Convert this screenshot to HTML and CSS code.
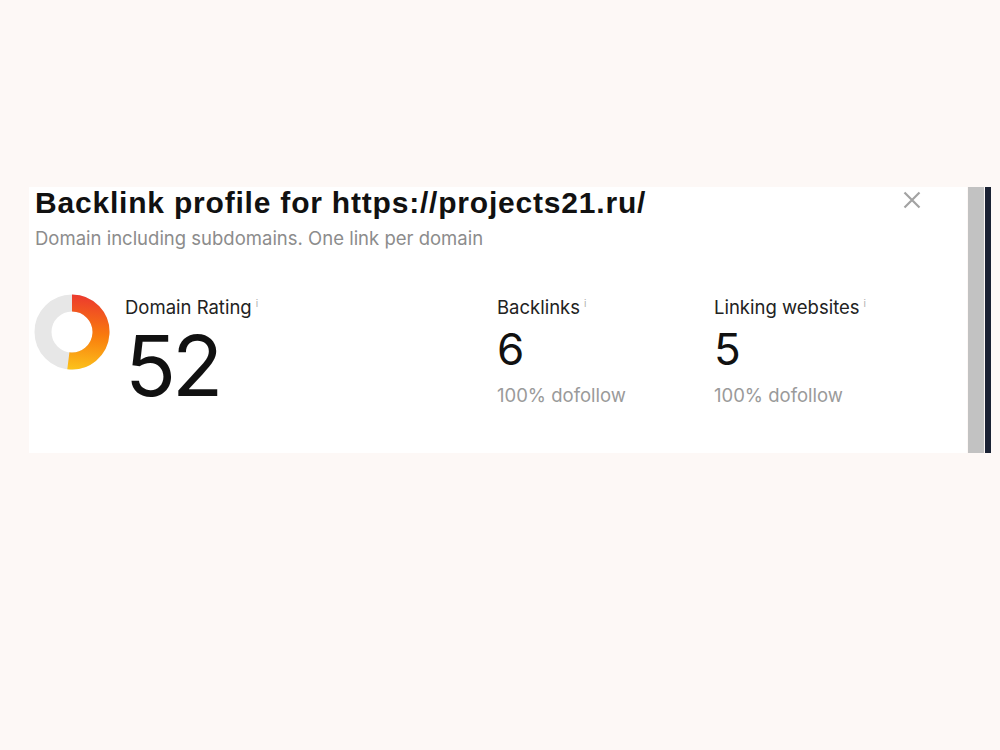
FILE: index.html
```html
<!DOCTYPE html>
<html lang="en">
<head>
  <meta charset="UTF-8">
  <meta name="viewport" content="width=device-width, initial-scale=1.0">
  <title>Backlink profile</title>
  <link rel="stylesheet" href="styles.css">
</head>
<body>
  <div class="frame">
    <div class="panel">
      <div class="panel-head">
        <h2>Backlink profile for https://projects21.ru/</h2>
        <button class="close" aria-label="Close">
          <svg width="18" height="18" viewBox="0 0 18 18"><path d="M1.5 1.5L16.5 16.5M16.5 1.5L1.5 16.5" stroke="#a3a3a3" stroke-width="2.2" fill="none"/></svg>
        </button>
      </div>
      <p class="subtitle">Domain including subdomains. One link per domain</p>

      <div class="stats">
        <div class="stat stat-dr">
          <svg class="donut" width="76" height="76" viewBox="0 0 76 76">
            <defs>
              <linearGradient id="drGrad" gradientUnits="userSpaceOnUse" x1="38" y1="0" x2="30" y2="76">
                <stop offset="0" stop-color="#ec3a2e"/>
                <stop offset="0.5" stop-color="#f97b0d"/>
                <stop offset="1" stop-color="#fcc51c"/>
              </linearGradient>
            </defs>
            <circle cx="38" cy="38" r="29" fill="none" stroke="#e7e7e7" stroke-width="17"/>
            <!-- rating arc: 52 of 100, clockwise from the top -->
            <path d="M38 9 A29 29 0 1 1 34.36 66.77" fill="none" stroke="url(#drGrad)" stroke-width="17"/>
          </svg>
          <div>
            <div class="label">Domain Rating<sup>i</sup></div>
            <div class="value value-big">52</div>
          </div>
        </div>
        <div class="stat stat-links">
          <div class="label">Backlinks<sup>i</sup></div>
          <div class="value">6</div>
          <div class="note">100% dofollow</div>
        </div>
        <div class="stat stat-sites">
          <div class="label">Linking websites<sup>i</sup></div>
          <div class="value">5</div>
          <div class="note">100% dofollow</div>
        </div>
      </div>
    </div>
    <div class="scrollbar"></div>
    <div class="edge"></div>
  </div>
</body>
</html>
```

FILE: styles.css
```css
body {
  margin: 0;
  background-color: #fdf8f6;
  font-family: Inter, "Liberation Sans", Arial, sans-serif;
  color: #1a1a1a;
}
.frame {
  display: flex;
  margin: 187px 0 0 29px;
  height: 266px;
}
.panel {
  width: 938px;
  background: #fff;
  padding: 0 6px 0 5px;
  box-sizing: border-box;
}
.panel-head {
  display: flex;
  justify-content: space-between;
  align-items: flex-start;
}
h2 {
  margin: 0 0 0 1px;
  padding-top: 1px;
  font-family: "Liberation Sans", Arial, sans-serif;
  font-weight: bold;
  font-size: 30px;
  line-height: 30px;
  letter-spacing: 0.8px;
  color: #111;
}
.close {
  background: none;
  border: none;
  padding: 0;
  margin: 4px 40px 0 0;
  cursor: pointer;
}
.subtitle {
  margin: 9px 0 0 1px;
  font-size: 18.5px;
  color: #8c8c8c;
}
.stats {
  display: flex;
  margin-top: 43px;
}
.stat-dr {
  display: flex;
  gap: 15px;
  width: 463px;
}
.stat-links {
  width: 217px;
}
.label {
  font-size: 18.5px;
  color: #222;
  line-height: 22px;
}
.label sup {
  font-size: 10px;
  color: #b0b0b0;
  margin-left: 4px;
}
.value {
  font-size: 44px;
  line-height: 56px;
  margin-top: 3px;
  color: #111;
}
.value-big {
  font-size: 84px;
  line-height: 64px;
  letter-spacing: -4px;
  margin-top: 16px;
}
.note {
  font-size: 18.5px;
  color: #9a9a9a;
  margin-top: 7px;
}
.donut {
  margin-top: 2px;
}
.scrollbar {
  width: 16px;
  background: #c2c2c2;
  margin-left: 1px;
}
.edge {
  width: 6px;
  margin-left: 1px;
  background: #1b2234;
}
```
